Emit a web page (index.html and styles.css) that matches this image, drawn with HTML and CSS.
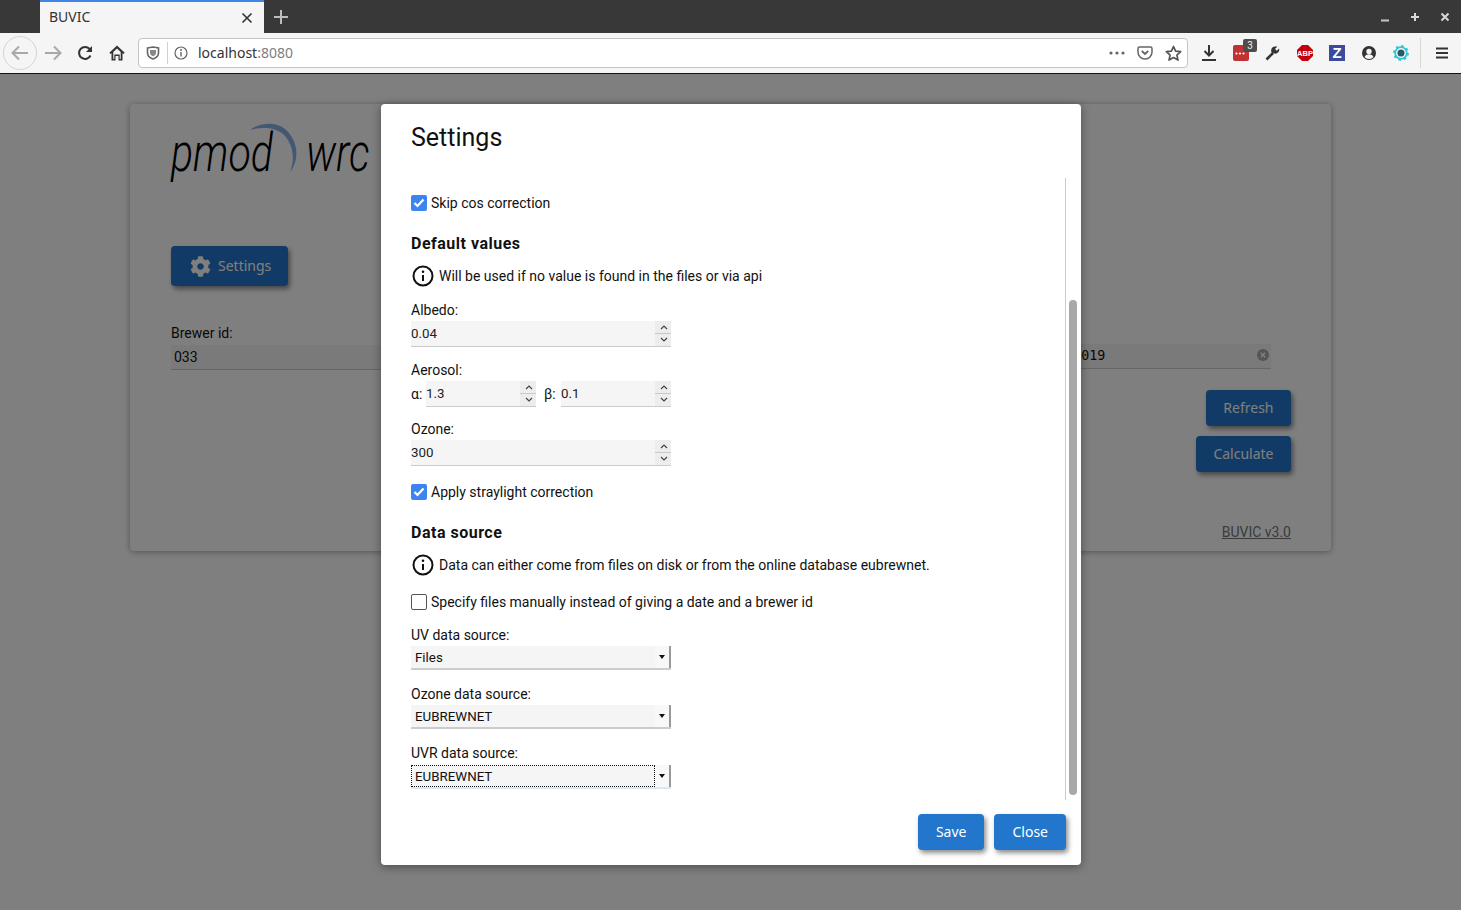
FILE: index.html
```html
<!DOCTYPE html>
<html lang="en">
<head>
  <meta charset="UTF-8">
  <title>BUVIC</title>
  <link rel="stylesheet" href="styles.css">
</head>
<body>

  <!-- browser window -->
  <header class="tabstrip">
    <div class="tab">
      <span class="tab-title">BUVIC</span>
      <svg class="tab-close" width="12" height="12" viewBox="0 0 12 12"><path d="M1.5 1.5l9 9M10.5 1.5l-9 9" stroke="#333" stroke-width="1.6" fill="none"/></svg>
    </div>
    <svg class="new-tab" width="16" height="16" viewBox="0 0 16 16"><path d="M8 1v14M1 8h14" stroke="#bdbdbd" stroke-width="2" fill="none"/></svg>
    <div class="window-controls">
      <svg width="10" height="10" viewBox="0 0 10 10"><path d="M1 8.5h8" stroke="#c8c8c8" stroke-width="2" fill="none"/></svg>
      <svg width="10" height="10" viewBox="0 0 10 10"><path d="M5 1v8M1 5h8" stroke="#d8d8d8" stroke-width="2" fill="none"/></svg>
      <svg width="10" height="10" viewBox="0 0 10 10"><path d="M1.5 1.5l7 7M8.5 1.5l-7 7" stroke="#d8d8d8" stroke-width="2" fill="none"/></svg>
    </div>
  </header>

  <nav class="toolbar">
    <div class="nav-btn back">
      <svg width="18" height="16" viewBox="0 0 18 16"><path d="M8 1.5L1.5 8 8 14.5M2 8h15" stroke="#a8a8a8" stroke-width="2" fill="none"/></svg>
    </div>
    <div class="nav-btn">
      <svg width="18" height="16" viewBox="0 0 18 16"><path d="M10 1.5L16.5 8 10 14.5M16 8H1" stroke="#a8a8a8" stroke-width="2" fill="none"/></svg>
    </div>
    <div class="nav-btn">
      <svg width="16" height="16" viewBox="0 0 16 16"><path d="M13.5 10.5A6 6 0 1 1 12.6 4" stroke="#333" stroke-width="2" fill="none"/><path d="M15 1v6H9z" fill="#333"/></svg>
    </div>
    <div class="nav-btn">
      <svg width="16" height="16" viewBox="0 0 16 16"><path d="M8 .5L.3 7.8l1.2 1.3 1-.9v7.300h4V11h3v4.500h4V8.200l1 .9 1.200-1.300z" fill="#333"/><path d="M8 3.600L4.300 7v7h1V9.500h5.400V14h1V7z" fill="#f5f5f5"/></svg>
    </div>

    <div class="urlbar">
      <svg class="url-shield" width="14" height="14" viewBox="0 0 14 14"><path d="M1.5 2L7 1l5.500 1v5c0 3-2.500 5-5.500 6-3-1-5.500-3-5.500-6z" fill="none" stroke="#666" stroke-width="1.6"/><path d="M4 4h6v3c0 1.500-1.500 2.500-3 3.300C5.500 9.500 4 8.500 4 7z" fill="#888"/></svg>
      <span class="url-sep"></span>
      <svg class="url-info" width="14" height="14" viewBox="0 0 14 14"><circle cx="7" cy="7" r="6" fill="none" stroke="#666" stroke-width="1.2"/><path d="M7 6v4.500" stroke="#666" stroke-width="1.4"/><circle cx="7" cy="4" r="1" fill="#666"/></svg>
      <span class="url-text">localhost<span class="url-port">:8080</span></span>
      <svg class="url-dots" width="16" height="4" viewBox="0 0 16 4"><circle cx="2" cy="2" r="1.6" fill="#666"/><circle cx="8" cy="2" r="1.6" fill="#666"/><circle cx="14" cy="2" r="1.6" fill="#666"/></svg>
      <svg class="url-pocket" width="16" height="14" viewBox="0 0 16 14"><path d="M1 2.500C1 1.500 1.600 1 2.500 1h11c.9 0 1.500.5 1.500 1.500V6c0 4-3 7-7 7S1 10 1 6z" fill="none" stroke="#666" stroke-width="1.5"/><path d="M4.800 5L8 8l3.200-3" fill="none" stroke="#666" stroke-width="1.8"/></svg>
      <svg class="url-star" width="17" height="17" viewBox="0 0 17 17"><path d="M8.500 1.500l2.100 4.700 5.100.5-3.800 3.400 1.100 5-4.500-2.600L4 15.100l1.100-5L1.300 6.700l5.100-.5z" fill="none" stroke="#555" stroke-width="1.7" stroke-linejoin="round"/></svg>
    </div>

    <div class="ext-icons">
      <div class="nav-btn">
        <svg width="14" height="16" viewBox="0 0 14 16"><path d="M7 0v10M2.500 6L7 10.500 11.500 6M0 15h14" stroke="#333" stroke-width="2" fill="none"/></svg>
      </div>
      <div class="nav-btn ext-badged">
        <svg width="16" height="16" viewBox="0 0 16 16"><rect width="16" height="16" rx="2" fill="#c13232"/><circle cx="3.500" cy="8.500" r="1.100" fill="#fff"/><circle cx="7" cy="8.500" r="1.100" fill="#fff"/><circle cx="10.500" cy="8.500" r="1.100" fill="#fff"/></svg>
        <span class="badge">3</span>
      </div>
      <div class="nav-btn">
        <svg width="16" height="16" viewBox="0 0 16 16"><path d="M1.500 14.500L8 8" stroke="#333" stroke-width="2.600" fill="none"/><path d="M7.200 8.200a4 4 0 0 1 3.600-6.700c.6 0 1 .1 1.400.3L10 4l1.800 1.800 2.300-2.200c.7 2.400-1 5-3.600 5.100-.6 0-1.200-.1-1.700-.4z" fill="#333"/></svg>
      </div>
      <div class="nav-btn">
        <svg width="16" height="16" viewBox="0 0 16 16"><path d="M5 0h6l5 5v6l-5 5H5l-5-5V5z" fill="#c4000b"/><text x="8" y="10.700" class="abp-text">ABP</text></svg>
      </div>
      <div class="nav-btn">
        <span class="z-icon">Z</span>
      </div>
      <div class="nav-btn">
        <svg width="14" height="14" viewBox="0 0 14 14"><circle cx="7" cy="7" r="7" fill="#333"/><circle cx="7" cy="5.500" r="2.700" fill="#f5f5f5"/><path d="M2.500 11c1-2 2.800-2.700 4.500-2.700s3.500.7 4.500 2.700A6 6 0 0 1 7 13a6 6 0 0 1-4.500-2z" fill="#f5f5f5"/></svg>
      </div>
      <div class="nav-btn">
        <svg width="16" height="16" viewBox="0 0 16 16"><circle cx="8" cy="8" r="5.800" fill="none" stroke="#2fc6d6" stroke-width="1.800"/><circle cx="8" cy="8" r="7" fill="none" stroke="#2fc6d6" stroke-width="1.800" stroke-dasharray="2.500 3"/><circle cx="8" cy="8" r="3.500" fill="#2a5a66"/></svg>
      </div>
      <span class="toolbar-sep"></span>
      <div class="nav-btn menu">
        <svg width="12" height="12" viewBox="0 0 12 12"><path d="M0 1.500h12M0 6h12M0 10.500h12" stroke="#333" stroke-width="1.8" fill="none"/></svg>
      </div>
    </div>
  </nav>

  <!-- the page -->
  <div class="page">
    <main class="card">
      <div class="logo">
        <span class="logo-word">pmod</span>
        <svg class="logo-arc" width="60" height="60" viewBox="0 0 60 60"><path d="M3 8C12 1 28-1 38 7c12 10 16 29 5 43 6-14 2-30-7-38C27 5 14 5 3 8z" fill="#88b0e8"/></svg>
        <span class="logo-word wrc">wrc</span>
      </div>

      <button class="btn btn-settings" type="button">
        <svg width="21" height="21" viewBox="0 0 512 512"><path fill="#fff" d="M487.4 315.7l-42.6-24.6c4.3-23.2 4.3-47 0-70.2l42.6-24.6c4.9-2.8 7.1-8.6 5.5-14-11.1-35.6-30-67.8-54.7-94.6-3.8-4.1-10-5.1-14.8-2.3L380.8 110c-17.9-15.4-38.5-27.3-60.8-35.1V25.8c0-5.6-3.9-10.5-9.4-11.7-36.7-8.2-74.3-7.8-109.2 0-5.5 1.2-9.4 6.1-9.4 11.7V75c-22.2 7.9-42.8 19.8-60.8 35.1L88.7 85.5c-4.9-2.8-11-1.9-14.8 2.3-24.7 26.7-43.6 58.9-54.7 94.6-1.7 5.4.6 11.2 5.5 14L67.3 221c-4.3 23.2-4.3 47 0 70.2l-42.6 24.6c-4.9 2.8-7.1 8.6-5.5 14 11.1 35.6 30 67.8 54.7 94.6 3.8 4.1 10 5.1 14.8 2.3l42.6-24.6c17.9 15.4 38.5 27.3 60.8 35.1v49.2c0 5.6 3.9 10.5 9.4 11.7 36.7 8.2 74.3 7.8 109.2 0 5.5-1.2 9.4-6.1 9.4-11.7v-49.2c22.2-7.9 42.8-19.8 60.8-35.1l42.6 24.6c4.9 2.8 11 1.9 14.8-2.3 24.7-26.7 43.6-58.9 54.7-94.6 1.5-5.5-.7-11.3-5.6-14.1zM256 336c-44.1 0-80-35.9-80-80s35.9-80 80-80 80 35.9 80 80-35.9 80-80 80z"/></svg>
        <span class="btn-text">Settings</span>
      </button>

      <div class="fields">
        <div class="field-brewer">
          <label class="card-label">Brewer id:</label>
          <div class="card-input"><span>033</span></div>
        </div>
        <div class="field-date">
          <label class="card-label">Date:</label>
          <div class="card-input date-input">
            <span>01.01.2019</span>
            <svg width="12" height="12" viewBox="0 0 12 12"><circle cx="6" cy="6" r="6" fill="#aaa"/><path d="M3.800 3.800l4.400 4.400M8.200 3.800L3.800 8.200" stroke="#fff" stroke-width="1.4"/></svg>
          </div>
        </div>
      </div>

      <div class="actions">
        <button class="btn" type="button"><span class="btn-text">Refresh</span></button>
        <button class="btn" type="button"><span class="btn-text">Calculate</span></button>
      </div>

      <a class="version" href="#">BUVIC v3.0</a>
    </main>

    <div class="overlay"></div>

    <section class="modal">
      <h2 class="modal-title">Settings</h2>

      <div class="modal-body">
        <div class="check-row first">
          <span class="check checked"><svg width="12" height="10" viewBox="0 0 12 10"><path d="M1.500 5l3 3 6-6.500" stroke="#fff" stroke-width="2.200" fill="none"/></svg></span>
          Skip cos correction
        </div>

        <h3>Default values</h3>
        <div class="info-row">
          <svg width="22" height="22" viewBox="0 0 22 22"><circle cx="11" cy="11" r="9.500" fill="none" stroke="#111" stroke-width="2"/><path d="M11 10v6" stroke="#111" stroke-width="2"/><circle cx="11" cy="6.800" r="1.300" fill="#111"/></svg>
          Will be used if no value is found in the files or via api
        </div>

        <div class="field">
          <label>Albedo:</label>
          <div class="num">
            <input type="text" value="0.04">
            <span class="spin"><svg width="16" height="25" viewBox="0 0 16 25"><path d="M6 8l3-3 3 3M6 17l3 3 3-3" stroke="#444" stroke-width="1.2" fill="none"/><path d="M0 12.500h16" stroke="#c8c8c8"/></svg></span>
          </div>
        </div>

        <div class="field field-wide">
          <label>Aerosol:</label>
          <div class="aerosol">
            <span class="greek">α:</span>
            <div class="num num-part">
              <input type="text" value="1.3">
              <span class="spin"><svg width="16" height="25" viewBox="0 0 16 25"><path d="M6 8l3-3 3 3M6 17l3 3 3-3" stroke="#444" stroke-width="1.2" fill="none"/><path d="M0 12.500h16" stroke="#c8c8c8"/></svg></span>
            </div>
            <span class="greek beta">β:</span>
            <div class="num num-part">
              <input type="text" value="0.1">
              <span class="spin"><svg width="16" height="25" viewBox="0 0 16 25"><path d="M6 8l3-3 3 3M6 17l3 3 3-3" stroke="#444" stroke-width="1.2" fill="none"/><path d="M0 12.500h16" stroke="#c8c8c8"/></svg></span>
            </div>
          </div>
        </div>

        <div class="field">
          <label>Ozone:</label>
          <div class="num">
            <input type="text" value="300">
            <span class="spin"><svg width="16" height="25" viewBox="0 0 16 25"><path d="M6 8l3-3 3 3M6 17l3 3 3-3" stroke="#444" stroke-width="1.2" fill="none"/><path d="M0 12.500h16" stroke="#c8c8c8"/></svg></span>
          </div>
        </div>

        <div class="check-row">
          <span class="check checked"><svg width="12" height="10" viewBox="0 0 12 10"><path d="M1.500 5l3 3 6-6.500" stroke="#fff" stroke-width="2.200" fill="none"/></svg></span>
          Apply straylight correction
        </div>

        <h3>Data source</h3>
        <div class="info-row">
          <svg width="22" height="22" viewBox="0 0 22 22"><circle cx="11" cy="11" r="9.500" fill="none" stroke="#111" stroke-width="2"/><path d="M11 10v6" stroke="#111" stroke-width="2"/><circle cx="11" cy="6.800" r="1.300" fill="#111"/></svg>
          Data can either come from files on disk or from the online database eubrewnet.
        </div>

        <div class="check-row tight">
          <span class="check"></span>
          Specify files manually instead of giving a date and a brewer id
        </div>

        <div class="field field-wide">
          <label>UV data source:</label>
          <div class="select"><span class="select-value">Files</span><span class="select-arrow"></span></div>
        </div>
        <div class="field field-select">
          <label>Ozone data source:</label>
          <div class="select"><span class="select-value">EUBREWNET</span><span class="select-arrow"></span></div>
        </div>
        <div class="field field-select focused">
          <label>UVR data source:</label>
          <div class="select"><span class="select-value">EUBREWNET</span><span class="select-arrow"></span></div>
        </div>
      </div>

      <div class="scroll-thumb"></div>

      <footer class="modal-footer">
        <button class="btn" type="button"><span class="btn-text">Save</span></button>
        <button class="btn" type="button"><span class="btn-text">Close</span></button>
      </footer>
    </section>
  </div>

</body>
</html>
```

FILE: styles.css
```css
html, body {
  height: 100%;
}

body {
  margin: 0;
  display: flex;
  flex-direction: column;
  overflow: hidden;
  font-family: Roboto, sans-serif;
  font-size: 14px;
  color: #111;
  background-color: #fff;
}

/* browser chrome */
.tabstrip {
  height: 33px;
  flex: none;
  display: flex;
  align-items: center;
  padding-left: 40px;
  background-color: #383838;
  box-sizing: border-box;
}

.tab {
  width: 224px;
  height: 33px;
  box-sizing: border-box;
  display: flex;
  align-items: center;
  justify-content: space-between;
  padding: 0 11px 0 9px;
  background-color: #f5f5f5;
  border-top: 2px solid #3d85e6;
  font-family: "Noto Sans", sans-serif;
  font-size: 14px;
  color: #333;
}

.tab-title {
  margin-bottom: 2px;
}

.new-tab {
  margin-left: 9px;
}

.window-controls {
  margin-left: auto;
  display: flex;
  gap: 20px;
  padding-right: 11px;
}

.toolbar {
  height: 41px;
  flex: none;
  box-sizing: border-box;
  display: flex;
  align-items: center;
  padding: 0 3px;
  background-color: #f5f5f5;
  border-bottom: 1px solid #111;
}

.nav-btn {
  width: 32px;
  height: 32px;
  flex: none;
  display: flex;
  align-items: center;
  justify-content: center;
  position: relative;
}

.nav-btn.back {
  width: 34px;
  height: 34px;
  box-sizing: border-box;
  border: 1px solid #d4d4d4;
  border-radius: 50%;
}

.urlbar {
  width: 1050px;
  height: 30px;
  flex: none;
  box-sizing: border-box;
  margin-left: 5px;
  display: flex;
  align-items: center;
  background-color: #fff;
  border: 1px solid #c4c4c4;
  border-radius: 4px;
}

.url-shield {
  margin-left: 7px;
}

.url-sep {
  width: 1px;
  height: 22px;
  margin-left: 7px;
  background-color: #d0d0d0;
}

.url-info {
  margin-left: 6px;
}

.url-text {
  margin: 0 0 2px 10px;
  font-family: "Noto Sans", sans-serif;
  font-size: 14px;
  color: #333;
}

.url-port {
  color: #808080;
}

.url-dots {
  margin-left: auto;
}

.url-pocket {
  margin-left: 12px;
}

.url-star {
  margin: 0 5px 0 12px;
}

.ext-icons {
  display: flex;
  align-items: center;
  margin-left: 5px;
}

.badge {
  position: absolute;
  top: 2px;
  right: 0;
  width: 14px;
  height: 13px;
  border-radius: 2px;
  background-color: #4d4d4d;
  color: #eee;
  font-size: 10px;
  line-height: 13px;
  text-align: center;
}

.abp-text {
  font-family: "Liberation Sans", sans-serif;
  font-size: 7.5px;
  font-weight: 700;
  fill: #fff;
  text-anchor: middle;
}

.z-icon {
  width: 16px;
  height: 16px;
  background-color: #3a4a9c;
  color: #fff;
  font-family: "Liberation Sans", sans-serif;
  font-weight: 700;
  font-size: 15px;
  line-height: 16px;
  text-align: center;
}

.toolbar-sep {
  width: 1px;
  height: 30px;
  margin: 0 5px 0 3px;
  background-color: #d8d8d8;
}

.menu {
  width: 32px;
}

/* page behind the dialog */
.page {
  flex: 1;
  position: relative;
  box-sizing: border-box;
  padding: 30px 130px 0;
  background-color: #fff;
}

.overlay {
  position: absolute;
  top: 0;
  left: 0;
  right: 0;
  bottom: 0;
  background-color: rgba(0, 0, 0, 0.5);
}

.card {
  height: 447px;
  box-sizing: border-box;
  padding: 0 40px 0 41px;
  border-radius: 4px;
  background-color: #fff;
  box-shadow: 0 1px 6px rgba(0, 0, 0, 0.35);
  display: flex;
  flex-direction: column;
}

.logo {
  height: 142px;
  flex: none;
  display: flex;
  align-items: flex-start;
  position: relative;
}

.logo-word {
  width: 102px;
  margin-top: 15px;
  font-weight: 300;
  font-style: italic;
  font-size: 54px;
  line-height: 68px;
  color: #000;
  transform: scaleX(0.76);
  transform-origin: left center;
}

.wrc {
  width: 64px;
  margin-left: 33px;
}

.logo-arc {
  position: absolute;
  top: 18px;
  left: 76px;
}

.btn {
  border: none;
  border-radius: 4px;
  padding: 0 17.5px;
  height: 36px;
  background-color: #2277cc;
  color: #fff;
  font-family: "Noto Sans", sans-serif;
  font-size: 14px;
  box-shadow: 2px 3px 5px rgba(0, 0, 0, 0.45);
}

.btn-text {
  display: block;
  margin-bottom: 2px;
}

.btn-settings {
  width: 117px;
  height: 40px;
  padding: 0 0 0 19px;
  display: flex;
  align-items: center;
  gap: 7px;
}

.fields {
  display: flex;
  justify-content: space-between;
  margin-top: 39px;
  padding-right: 20px;
}

.field-brewer {
  width: 600px;
}

.field-date {
  width: 250px;
}

.card-label {
  display: block;
  height: 16px;
  line-height: 16px;
}

.card-input {
  margin-top: 4px;
  height: 25px;
  box-sizing: border-box;
  padding-left: 3px;
  display: flex;
  align-items: center;
  justify-content: space-between;
  background-color: #f5f5f5;
  border-bottom: 1px solid #ccc;
}

.date-input {
  margin-top: 3px;
  padding: 0 2px 2px 4px;
  font-family: "DejaVu Sans Mono", monospace;
  font-size: 13.33px;
}

.actions {
  margin-top: 20px;
  display: flex;
  flex-direction: column;
  align-items: flex-end;
  gap: 10px;
}

.version {
  margin-top: auto;
  margin-bottom: 11px;
  align-self: flex-end;
  color: #777;
  font-size: 14px;
}

/* settings dialog */
.modal {
  position: absolute;
  top: 30px;
  left: 381px;
  width: 700px;
  height: 761px;
  box-sizing: border-box;
  border-radius: 4px;
  background-color: #fff;
  box-shadow: 0 2px 10px rgba(0, 0, 0, 0.4);
}

.modal-title {
  margin: 0;
  height: 74px;
  padding: 17px 0 0 30px;
  box-sizing: border-box;
  font-size: 25px;
  font-weight: 400;
  line-height: 34px;
  color: #111;
}

.modal-body {
  height: 622px;
  width: 685px;
  box-sizing: border-box;
  padding: 15px 0 0 30px;
  border-right: 1px solid #ccc;
  overflow: hidden;
}

.scroll-thumb {
  position: absolute;
  left: 688px;
  top: 196px;
  width: 8px;
  height: 495px;
  border-radius: 4px;
  background-color: #a8a8a8;
}

.check-row {
  height: 20px;
  margin-top: 16px;
  display: flex;
  align-items: center;
  gap: 4px;
}

.check-row.first {
  margin-top: 0;
}

.check-row.tight {
  margin-top: 15px;
}

.check {
  width: 16px;
  height: 16px;
  flex: none;
  box-sizing: border-box;
  border: 1.5px solid #555;
  border-radius: 2px;
  display: flex;
  align-items: center;
  justify-content: center;
}

.check.checked {
  border: none;
  background-color: #3c85f0;
}

.modal-body h3 {
  height: 20px;
  margin: 20px 0 0;
  font-size: 16px;
  font-weight: 700;
  letter-spacing: 0.5px;
  line-height: 22px;
  color: #111;
}

.info-row {
  height: 24px;
  margin-top: 11px;
  display: flex;
  align-items: center;
  gap: 5px;
  padding-left: 1px;
}

.field {
  margin-top: 14px;
}

.field-wide {
  margin-top: 15px;
}

.field-select {
  margin-top: 16px;
}

.field label {
  display: block;
  height: 16px;
  line-height: 16px;
  margin-bottom: 3px;
}

.num {
  width: 260px;
  height: 26px;
  box-sizing: border-box;
  display: flex;
  background-color: #f5f5f5;
  border-bottom: 1px solid #ccc;
}

.num input {
  flex: 1;
  min-width: 0;
  border: none;
  padding: 0;
  background: none;
  font-family: Roboto, sans-serif;
  font-size: 13.33px;
  color: #222;
}

.spin {
  width: 16px;
  flex: none;
  background-color: #ededed;
}

.spin svg {
  display: block;
}

.aerosol {
  display: flex;
  align-items: center;
}

.greek {
  width: 15px;
  flex: none;
}

.beta {
  width: 17px;
  margin-left: 8px;
}

.num-part {
  width: 110px;
}

.select {
  width: 260px;
  height: 24px;
  box-sizing: border-box;
  display: flex;
  background-color: #f5f5f5;
  border-bottom: 2px solid #ccc;
}

.select-value {
  flex: 1;
  padding-left: 4px;
  font-size: 13.33px;
  line-height: 23px;
}

.select-arrow {
  width: 16px;
  flex: none;
  position: relative;
  box-sizing: border-box;
  border-right: 2px solid #999;
  background-color: #f8f8f8;
}

.select-arrow::after {
  content: "";
  position: absolute;
  left: 4px;
  top: 9px;
  border-left: 3px solid transparent;
  border-right: 3px solid transparent;
  border-top: 4px solid #111;
}

.focused .select {
  margin-top: 4px;
  border-bottom-color: #dde8f5;
}

.focused .select-value {
  outline: 1px dotted #111;
  outline-offset: -1px;
}

.modal-footer {
  position: absolute;
  right: 15px;
  bottom: 15px;
  display: flex;
  gap: 10px;
}

.modal-footer .btn {
  padding: 0 18px;
}
```
